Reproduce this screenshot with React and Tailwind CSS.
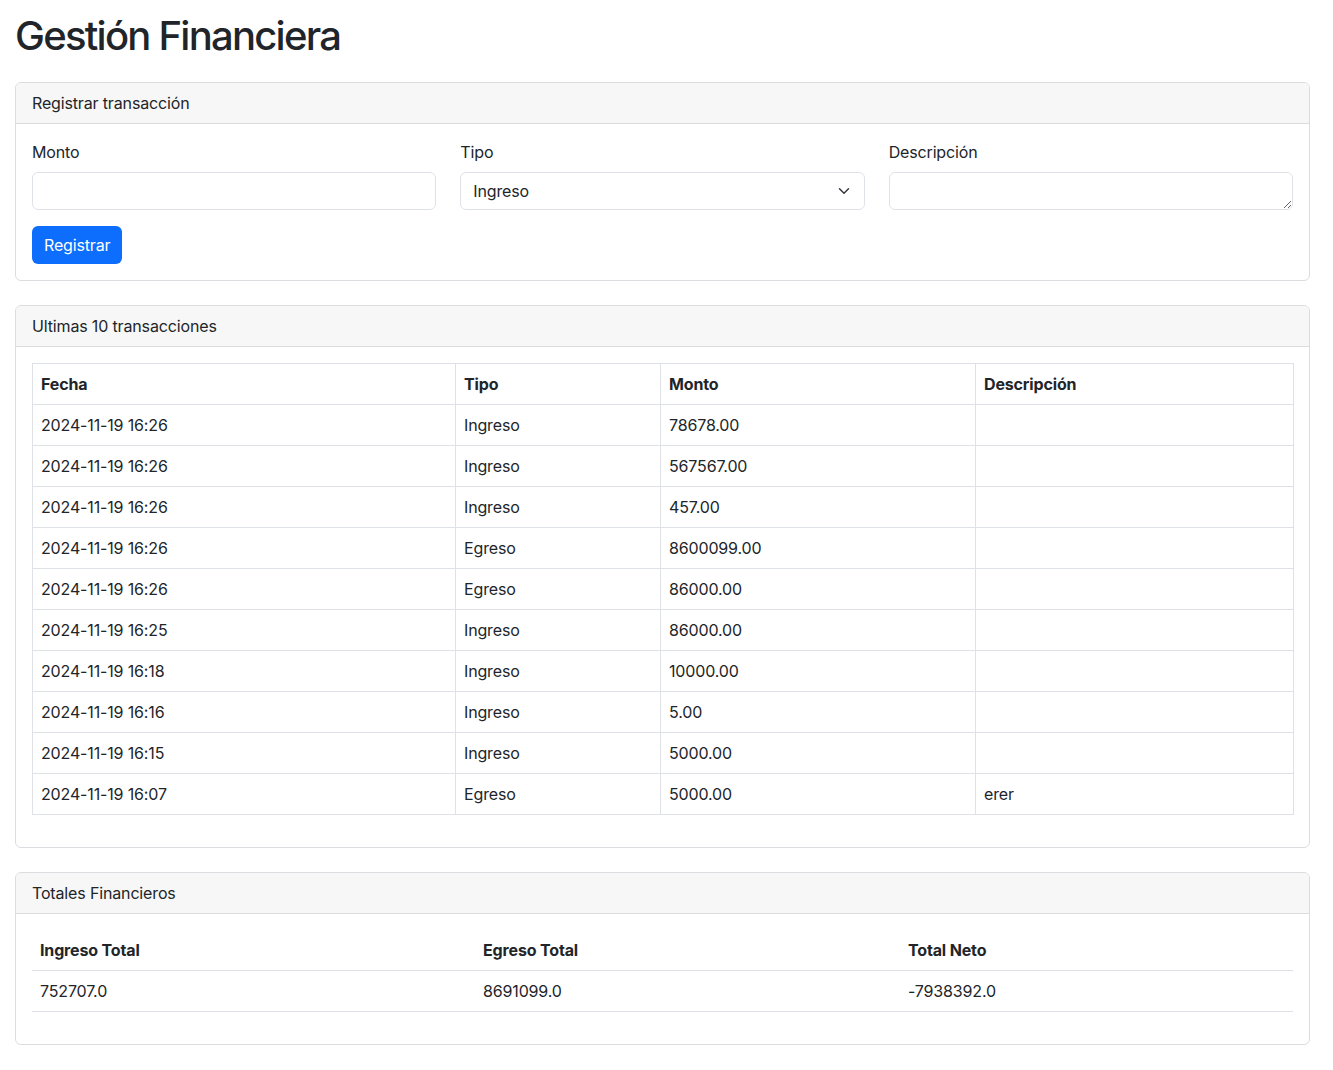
import React from "react";

const rows = [
  ["2024-11-19 16:26", "Ingreso", "78678.00", ""],
  ["2024-11-19 16:26", "Ingreso", "567567.00", ""],
  ["2024-11-19 16:26", "Ingreso", "457.00", ""],
  ["2024-11-19 16:26", "Egreso", "8600099.00", ""],
  ["2024-11-19 16:26", "Egreso", "86000.00", ""],
  ["2024-11-19 16:25", "Ingreso", "86000.00", ""],
  ["2024-11-19 16:18", "Ingreso", "10000.00", ""],
  ["2024-11-19 16:16", "Ingreso", "5.00", ""],
  ["2024-11-19 16:15", "Ingreso", "5000.00", ""],
  ["2024-11-19 16:07", "Egreso", "5000.00", "erer"],
];

function Card({ title, children }) {
  return (
    <div className="border border-[#dadcdf] rounded-[6px] bg-white mb-6 overflow-hidden">
      <div className="bg-[#f7f7f7] border-b border-[#dadcdf] px-4 py-2 h-[41px] leading-6">
        {title}
      </div>
      <div className="p-4">{children}</div>
    </div>
  );
}

export default function App() {
  return (
    <div
      className="min-h-[1070px] bg-white text-[#212529] text-base leading-6 tracking-[-0.15px] pl-[15px] pr-[23px] pt-[10px]"
      style={{ fontFamily: "Inter, 'Liberation Sans', sans-serif" }}
    >
      <h1 className="text-[40px] leading-[48px] font-medium mt-[2px] mb-[22px] tracking-[-1.75px]">Gestión Financiera</h1>

      <Card title="Registrar transacción">
        <div className="grid grid-cols-3 gap-x-6">
          <div>
            <label className="block mb-2 h-6">Monto</label>
            <input className="block w-full h-[38px] border border-[#dee2e6] rounded-[6px] px-3 outline-none" />
          </div>
          <div>
            <label className="block mb-2 h-6">Tipo</label>
            <div className="relative h-[38px] border border-[#dee2e6] rounded-[6px] pl-3 flex items-center">
              <span>Ingreso</span>
              <svg className="absolute right-3 top-[12px]" width="16" height="12" viewBox="0 0 16 16" fill="none" stroke="#343a40" strokeWidth="2" strokeLinecap="round" strokeLinejoin="round">
                <path d="m2 5 6 6 6-6" />
              </svg>
            </div>
          </div>
          <div>
            <label className="block mb-2 h-6">Descripción</label>
            <textarea rows={1} className="block w-full h-[38px] border border-[#dee2e6] rounded-[6px] px-3 py-[6px] leading-6 outline-none resize-y" />
          </div>
        </div>
        <button className="mt-4 h-[38px] px-3 bg-[#0d6efd] text-white rounded-[6px] leading-6">
          Registrar
        </button>
      </Card>

      <Card title="Ultimas 10 transacciones">
        <table className="w-full border-collapse mb-4 table-fixed">
          <colgroup>
            <col style={{ width: 423 }} />
            <col style={{ width: 205 }} />
            <col style={{ width: 315 }} />
            <col style={{ width: 318 }} />
          </colgroup>
          <thead>
            <tr>
              {["Fecha", "Tipo", "Monto", "Descripción"].map((h) => (
                <th key={h} className="border border-[#dee2e6] px-2 py-2 text-left font-bold leading-6">
                  {h}
                </th>
              ))}
            </tr>
          </thead>
          <tbody>
            {rows.map((r, i) => (
              <tr key={i}>
                {r.map((c, j) => (
                  <td key={j} className="border border-[#dee2e6] px-2 py-2 leading-6 h-[41px]">
                    {c}
                  </td>
                ))}
              </tr>
            ))}
          </tbody>
        </table>
      </Card>

      <Card title="Totales Financieros">
        <table className="w-full border-collapse mb-4 table-fixed">
          <colgroup>
            <col style={{ width: 443 }} />
            <col style={{ width: 425 }} />
            <col style={{ width: 393 }} />
          </colgroup>
          <thead>
            <tr className="border-b border-[#dee2e6]">
              <th className="px-2 py-2 text-left font-bold leading-6">Ingreso Total</th>
              <th className="px-2 py-2 text-left font-bold leading-6">Egreso Total</th>
              <th className="px-2 py-2 text-left font-bold leading-6">Total Neto</th>
            </tr>
          </thead>
          <tbody>
            <tr className="border-b border-[#dee2e6]">
              <td className="px-2 py-2 leading-6">752707.0</td>
              <td className="px-2 py-2 leading-6">8691099.0</td>
              <td className="px-2 py-2 leading-6">-7938392.0</td>
            </tr>
          </tbody>
        </table>
      </Card>
    </div>
  );
}
